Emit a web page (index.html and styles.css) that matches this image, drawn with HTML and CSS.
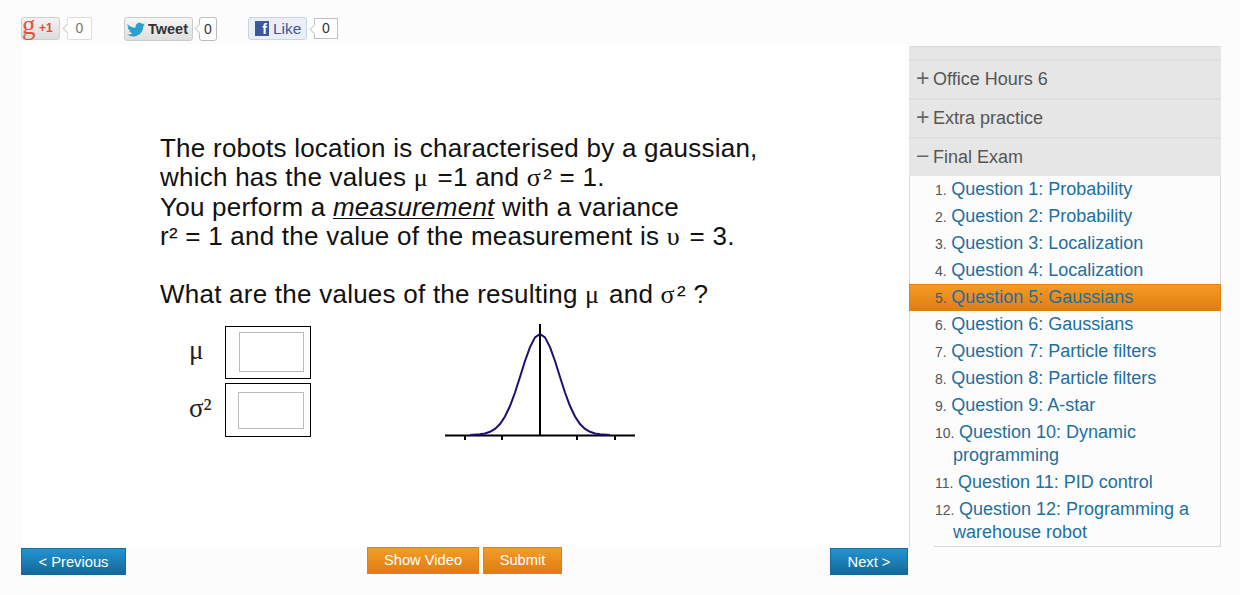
FILE: index.html
```html
<!DOCTYPE html>
<html>
<head>
    <title>Final Exam</title>
    <link rel="stylesheet" href="styles.css">
</head>
<body>
    <div class="social">
        <div class="share share-gplus">
            <span class="btn-gplus"><span class="g-logo">g</span><b>+1</b></span>
            <span class="count count-gplus">0</span>
        </div>
        <div class="share share-tweet">
            <span class="btn-tweet">
                <svg class="bird" width="18" height="15" viewBox="0 0 18 15"><path d="M0.6 2.2C2.6 4.4 5 5.6 8.6 5.8 8.2 3 10 0.8 12.4 0.8c1.2 0 2.2 0.5 2.9 1.3 0.8-0.2 1.6-0.5 2.2-0.9-0.3 0.9-0.8 1.5-1.5 2 0.7-0.1 1.3-0.3 1.9-0.5-0.5 0.7-1 1.3-1.7 1.8C16.4 9.400 12.600 14.400 6.400 14.400 3.900 14.400 1.800 13.700 0 12.600c2.100 0.200 3.900-0.300 5.400-1.500-1.600 0-2.900-1.100-3.400-2.500 0.600 0.100 1.100 0.100 1.600-0.100C1.900 8.100 0.700 6.600 0.700 4.800 1.200 5.100 1.800 5.300 2.400 5.300 0.800 4.300 0 3.700 0.600 2.200z"/></svg>
                <b>Tweet</b>
            </span>
            <span class="count count-tweet">0</span>
        </div>
        <div class="share share-like">
            <span class="btn-like"><span class="f-logo">f</span>Like</span>
            <span class="count count-like">0</span>
        </div>
    </div>

    <div class="main">
        <div class="lesson">
            <div class="slide">
                <p class="slide-text">The robots location is characterised by a gaussian,<br>
                which has the values <span class="sym">μ</span> =1 and <span class="sym">σ</span>² = 1.<br>
                You perform a <em>measurement</em> with a variance<br>
                r² = 1 and the value of the measurement is <span class="sym">υ</span> = 3.</p>
                <p class="slide-text slide-question">What are the values of the resulting <span class="sym">μ</span> and <span class="sym">σ</span>² ?</p>
                <div class="answer">
                    <div class="fields">
                        <div class="field">
                            <span class="field-label sym">μ</span>
                            <div class="field-box"><input type="text"></div>
                        </div>
                        <div class="field field-second">
                            <span class="field-label sym">σ²</span>
                            <div class="field-box"><input type="text"></div>
                        </div>
                    </div>
                    <svg class="graph" width="190" height="117" viewBox="445 325 190 117">
                        <g stroke="#000" stroke-width="2" fill="none">
                            <path d="M445 436.500H635"/>
                            <path d="M540 325V437"/>
                            <path d="M465 437V441M502 437V441M577 437V441M615 437V441"/>
                        </g>
                        <polyline fill="none" stroke="#1a1070" stroke-width="2" points="470,436 480,435.300 485,434.500 490,432.800 495,429.900 500,425 505,417.500 510,407 515,393.500 520,378 525,362 530,348.100 535,338.400 540,335 545,338.400 550,348.100 555,362 560,378 565,393.500 570,407 575,417.500 580,425 585,429.900 590,432.800 595,434.500 600,435.300 610,436"/>
                    </svg>
                </div>
            </div>
            <div class="controls">
                <a class="btn btn-blue btn-prev">&lt; Previous</a>
                <div class="controls-center">
                    <a class="btn btn-orange">Show Video</a>
                    <a class="btn btn-orange">Submit</a>
                </div>
                <a class="btn btn-blue btn-next">Next &gt;</a>
            </div>
        </div>

        <div class="sidebar">
            <div class="unit unit-stub"></div>
            <div class="unit"><span class="unit-icon">+</span>Office Hours 6</div>
            <div class="unit"><span class="unit-icon">+</span>Extra practice</div>
            <div class="unit"><span class="unit-icon">−</span>Final Exam</div>
            <ul class="questions">
                <li><span class="num">1.</span> <a>Question 1: Probability</a></li>
                <li><span class="num">2.</span> <a>Question 2: Probability</a></li>
                <li><span class="num">3.</span> <a>Question 3: Localization</a></li>
                <li><span class="num">4.</span> <a>Question 4: Localization</a></li>
                <li class="current"><span class="num">5.</span> <a>Question 5: Gaussians</a></li>
                <li><span class="num">6.</span> <a>Question 6: Gaussians</a></li>
                <li><span class="num">7.</span> <a>Question 7: Particle filters</a></li>
                <li><span class="num">8.</span> <a>Question 8: Particle filters</a></li>
                <li><span class="num">9.</span> <a>Question 9: A-star</a></li>
                <li><span class="num">10.</span> <a>Question 10: Dynamic programming</a></li>
                <li><span class="num">11.</span> <a>Question 11: PID control</a></li>
                <li><span class="num">12.</span> <a>Question 12: Programming a warehouse robot</a></li>
            </ul>
        </div>
    </div>
</body>
</html>
```

FILE: styles.css
```css
body { font-family: "Liberation Sans", Arial, sans-serif; background-color: #fcfcfc; margin: 0; color: #000; }

/* share buttons */
.social { display: flex; height: 28px; padding: 17px 0 0 21px; }
.share { display: flex; align-items: flex-start; }
.share-tweet { margin-left: 32px; }
.share-like { margin-left: 31px; }
.btn-gplus { display: flex; width: 39px; height: 23px; box-sizing: border-box; border: 1px solid #d0d0d0; border-radius: 3px; background: linear-gradient(#f2f2f2, #dcdcdc); }
.g-logo { font-family: "Liberation Serif", serif; font-size: 27px; line-height: 15px; color: #e0553a; width: 17px; }
.btn-gplus b { font-size: 12px; line-height: 21px; color: #dd4b39; }
.btn-tweet { display: flex; align-items: center; width: 69px; height: 24px; box-sizing: border-box; padding-left: 2px; border: 1px solid #ccc; border-radius: 3px; background: linear-gradient(#f6f6f6, #dedede); }
.bird { fill: #2a9fd0; margin-right: 3px; }
.btn-tweet b { font-size: 14.500px; color: #333; }
.btn-like { display: flex; align-items: center; width: 59px; height: 23px; box-sizing: border-box; padding-left: 6px; border: 1px solid #cad4e7; border-radius: 3px; background: #eceef5; color: #3b5998; font-size: 15.500px; }
.f-logo { width: 14px; height: 15px; margin-right: 4px; background: #3b5998; color: #fff; font-weight: bold; font-size: 14px; line-height: 17px; text-align: right; padding-right: 2px; box-sizing: border-box; }
.count { position: relative; display: block; box-sizing: border-box; text-align: center; background: #fff; font-size: 14px; color: #333; }
.count::before { content: ""; position: absolute; left: -4px; top: 7px; width: 6px; height: 6px; background: #fff; border-left: 1px solid #ccc; border-bottom: 1px solid #ccc; transform: rotate(45deg); }
.count-gplus { width: 25px; height: 23px; margin-left: 7px; border: 1px solid #ddd; border-radius: 2px; line-height: 21px; font-size: 14px; color: #777; }
.count-tweet { width: 18px; height: 24px; margin-left: 6px; border: 1px solid #bbb; border-radius: 3px; line-height: 22px; }
.count-like { width: 24px; height: 21px; margin: 1px 0 0 7px; border: 1px solid #c1c1c1; line-height: 19px; }

/* main area */
.main { display: flex; padding-left: 21px; }
.lesson { width: 888px; }
.slide { height: 413px; padding-top: 89px; background: #fff; }
.slide-text { margin: 0 0 0 139px; font-size: 26px; letter-spacing: 0.240px; line-height: 29.300px; color: #111; white-space: nowrap; }
.slide-text em { text-decoration: underline; text-decoration-thickness: 1px; text-underline-offset: 2px; }
.slide-text .sym { letter-spacing: 2.500px; line-height: 1; }
.slide-question { margin-top: 29px; }
.sym { font-family: "Liberation Serif", serif; }
.answer { display: flex; align-items: flex-start; margin: 17px 0 0 166px; }
.field { display: flex; align-items: center; height: 53px; }
.field-second { height: 54px; margin-top: 4px; }
.field-label { width: 38px; font-size: 27px; padding-bottom: 4px; text-indent: 2px; color: #222; }
.field-box { display: flex; justify-content: flex-end; align-items: center; box-sizing: border-box; width: 86px; height: 100%; padding-right: 6px; border: 1px solid #000; }
.field-box input { box-sizing: border-box; width: 65px; height: 40px; margin-bottom: 2px; padding: 0; border: 1px solid #bbb; background: #fff; }
.field-second input { width: 66px; height: 37px; margin: 0; }
.graph { display: block; margin: -2px 0 0 134px; }

/* bottom buttons */
.controls { display: flex; align-items: flex-start; }
.btn { display: block; box-sizing: border-box; height: 27px; line-height: 26px; padding: 0 10px; color: #fff; font-size: 14.700px; text-align: center; }
.btn-blue { background: linear-gradient(#2394cf, #14689b); border: 1px solid #186c9f; margin-top: 1px; }
.btn-orange { background: linear-gradient(#f69c26, #de7d12); border: 1px solid #e08016; line-height: 25px; }
.btn-prev { width: 105px; }
.btn-next { width: 78px; margin: 1px 1px 0 auto; }
.controls-center { display: flex; gap: 4px; margin-left: 241px; }
.controls-center .btn:first-child { width: 112px; }
.controls-center .btn:last-child { width: 79px; }

/* sidebar */
.sidebar { width: 312px; margin-top: 1px; }
.unit { height: 37px; margin-top: 2px; background: #e6e6e6; box-shadow: 0 -2px 0 #dedede; font-size: 18px; line-height: 36px; color: #555; }
.unit-stub { height: 13px; margin-top: 0; box-shadow: none; border-top: 1px solid #dcdcdc; box-sizing: border-box; }
.unit-icon { display: inline-block; width: 24px; padding-left: 7px; box-sizing: border-box; font-size: 23px; line-height: 34px; color: #666; vertical-align: top; }
.questions { list-style: none; margin: 0; padding: 0; border-left: 1px solid #d8d8d8; border-right: 1px solid #d8d8d8; }
.questions::after { content: ""; display: block; margin-left: 24px; border-bottom: 1px solid #d8d8d8; }
.questions li { padding: 2px 10px 2px 43px; text-indent: -18px; font-size: 18px; line-height: 23px; }
.questions a { color: #1f6f9e; }
.num { font-size: 14px; line-height: 1; color: #555; margin-right: -0.500px; }
.questions li.current { margin: 0 -1px; padding-left: 44px; padding-right: 11px; background: linear-gradient(#f69c26, #de7d12); box-shadow: inset 0 0 0 1px #e08016; }
```
